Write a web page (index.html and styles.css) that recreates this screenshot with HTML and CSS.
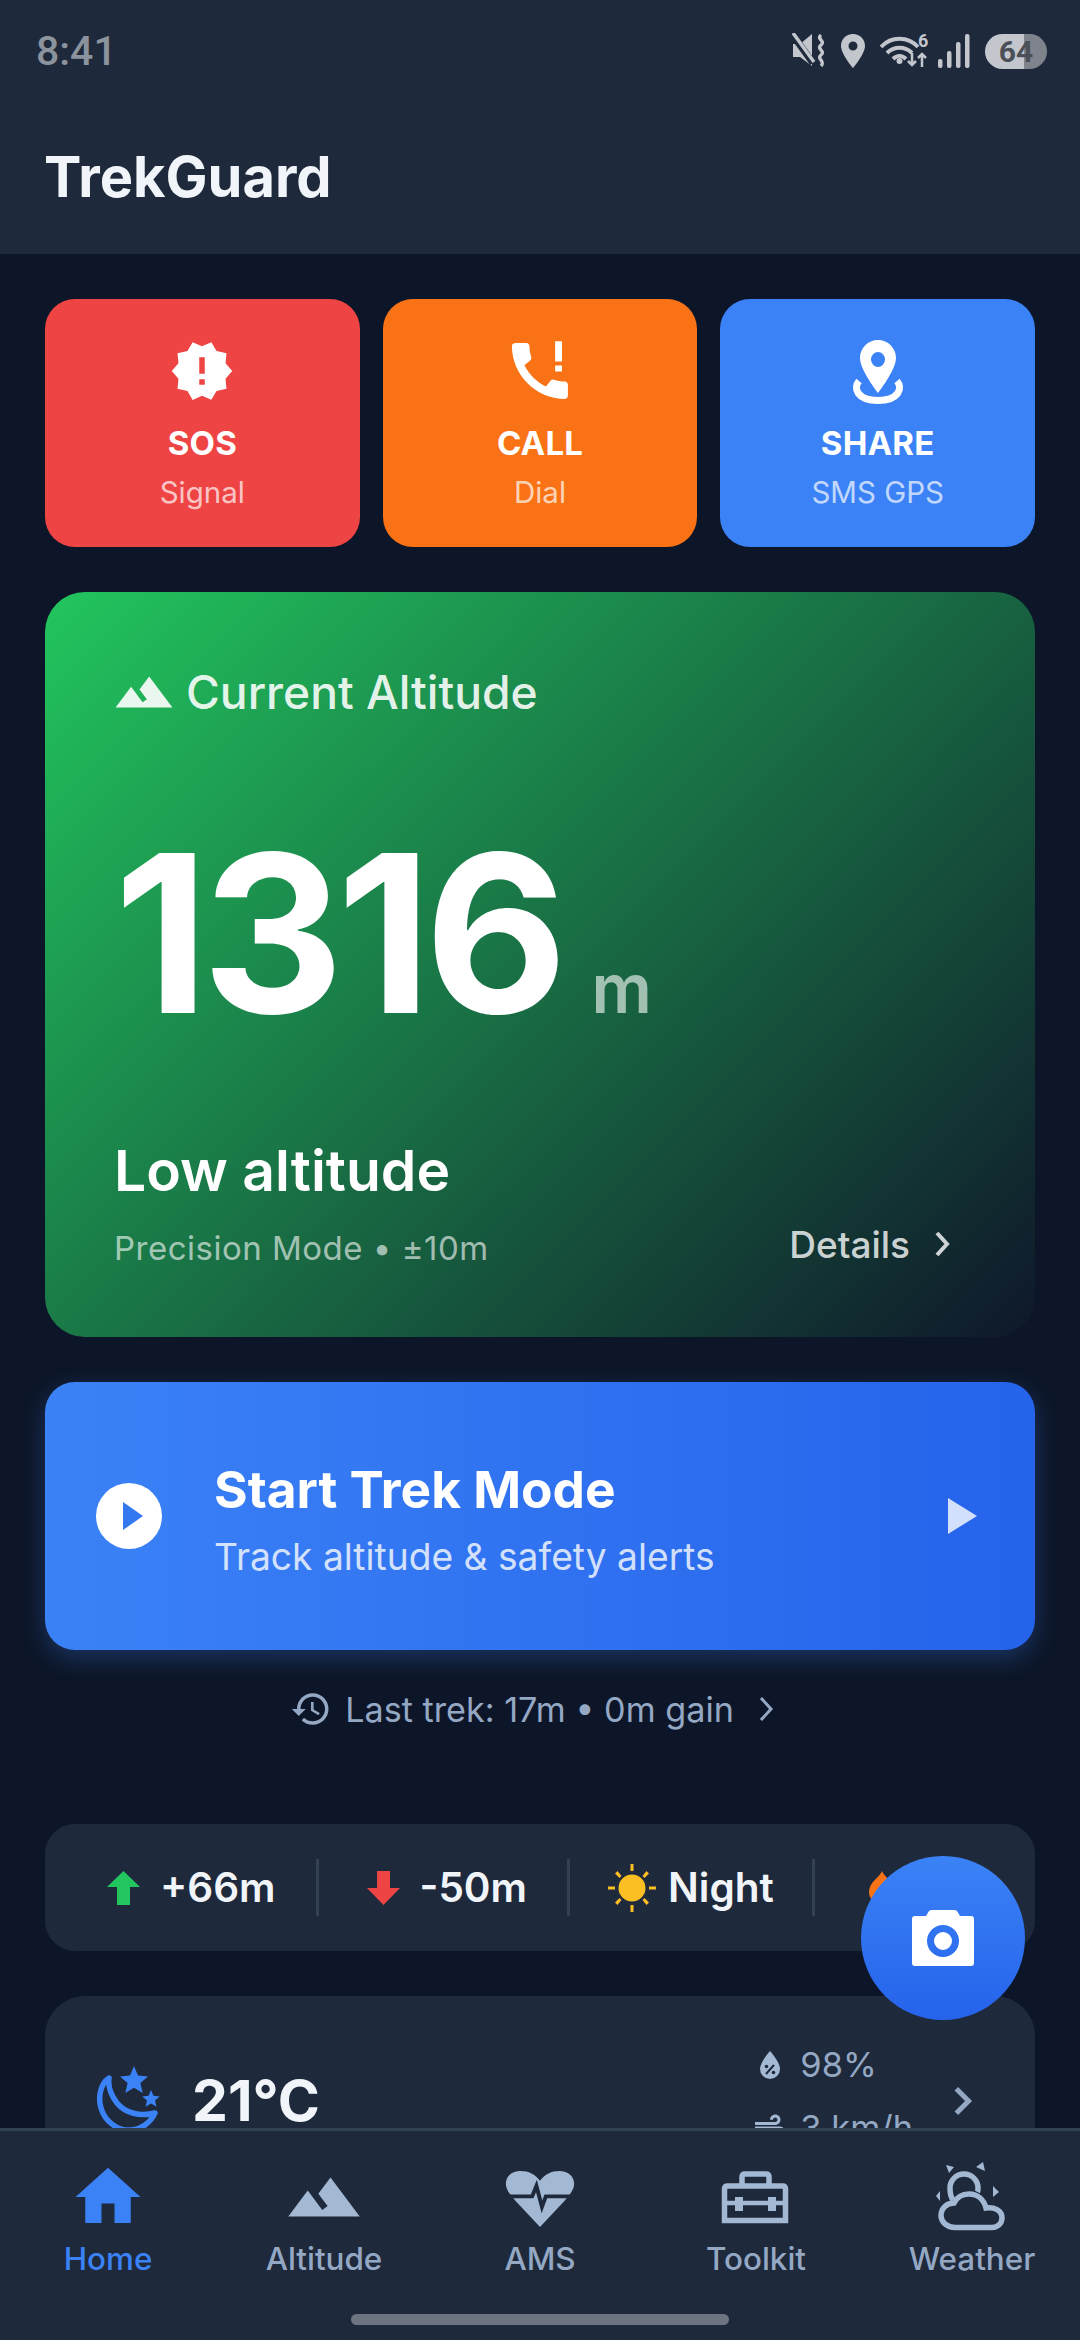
FILE: index.html
```html
<!DOCTYPE html>
<html lang="en">
<head>
<meta charset="utf-8">
<title>TrekGuard</title>
<link rel="stylesheet" href="styles.css">
</head>
<body>
<div class="phone">
  <header class="appbar">
    <div class="status">
      <span class="clock">8:41</span>
      <div class="status-icons">
        <svg class="si-mute" viewBox="0 0 36 36"><path class="si-fill" d="M1 11h7L20 1v32l-12-9H1z"/><path class="si-gap" d="M0 1l21 29"/><path class="si-line" d="M1 0l21 29"/><path class="si-line" d="M29 2c-5 4 5 6 0 10s5 6 0 10 5 6 0 11"/></svg>
        <svg class="si-pin" viewBox="0 0 24 34"><path class="si-fill" fill-rule="evenodd" d="M12 0C5 0 0 5 0 12c0 8 12 22 12 22s12-14 12-22C24 5 19 0 12 0zm0 7.500a4.500 4.500 0 1 1 0 9 4.500 4.500 0 0 1 0-9z"/></svg>
        <svg class="si-wifi" viewBox="0 -6 48 48"><path class="si-wave" d="M1 14C11 3 28 3 38 14"/><path class="si-wave" d="M7 20c7-7 18-7 25 0"/><path class="si-wave" d="M13 26c4-4 9-4 13 0"/><circle class="si-fill" cx="19.500" cy="28" r="3"/><text class="si-six" x="38" y="14">6</text><path class="si-thin" d="M32 20v12m-4-4l4 4 4-4"/><path class="si-thin" d="M42 34V21m-4 4l4-4 4 4"/></svg>
        <svg class="si-signal" viewBox="0 0 32 34"><rect class="si-fill" x="0" y="25" width="4.500" height="9" rx="2"/><rect class="si-fill" x="9" y="17" width="4.500" height="17" rx="2"/><rect class="si-fill" x="18" y="8" width="4.500" height="26" rx="2"/><rect class="si-fill" x="27" y="0" width="4.500" height="34" rx="2"/></svg>
        <span class="battery">64</span>
      </div>
    </div>
    <h1 class="brand">TrekGuard</h1>
  </header>

  <main class="content">
    <section class="actions">
      <div class="action action-red">
        <svg class="action-icon" viewBox="0 0 24 24"><path d="M23 12l-2.440-2.790.34-3.690-3.610-.82-1.890-3.200L12 2.960 8.600 1.500 6.710 4.690 3.100 5.500l.34 3.700L1 12l2.440 2.790-.34 3.700 3.610.82L8.600 22.500l3.400-1.470 3.400 1.460 1.890-3.190 3.610-.82-.34-3.690L23 12zm-10 5h-2v-2h2v2zm0-4h-2V7h2v6z"/></svg>
        <span class="action-title">SOS</span>
        <span class="action-sub">Signal</span>
      </div>
      <div class="action action-orange">
        <svg class="action-icon" viewBox="0 0 24 24"><g transform="translate(-1.600 -1.600) scale(1.131)"><path d="M20.010 15.380c-1.230 0-2.420-.2-3.530-.56-.35-.12-.74-.03-1.010.24l-1.570 1.970c-2.830-1.350-5.480-3.900-6.890-6.830l1.950-1.660c.27-.28.35-.67.24-1.020-.37-1.110-.56-2.300-.56-3.530 0-.54-.45-.99-.99-.99H4.190C3.650 3 3 3.240 3 3.990 3 13.280 10.730 21 20.010 21c.71 0 .99-.63.99-1.180v-3.450c0-.54-.45-.99-.99-.99z"/></g><path d="M17.500 1.200H20v7.300h-2.500zM17.500 10H20v2.200h-2.500z"/></svg>
        <span class="action-title">CALL</span>
        <span class="action-sub">Dial</span>
      </div>
      <div class="action action-blue">
        <svg class="action-icon" viewBox="0 0 66 66"><path fill-rule="evenodd" d="M33 2C23 2 15 10 15 20c0 12 18 35 18 35s18-23 18-35C51 10 43 2 33 2zm0 12a7 7.500 0 1 1 0 15 7 7.500 0 0 1 0-15z"/><path class="ring" d="M14 43C8 50 12 62.500 33 62.500S58 50 52 43"/></svg>
        <span class="action-title">SHARE</span>
        <span class="action-sub">SMS GPS</span>
      </div>
    </section>

    <section class="altitude">
      <div class="alt-head">
        <svg class="alt-mtn" viewBox="0 0 24 24"><path d="M14 6l-3.750 5 2.850 3.800-1.600 1.200C9.810 13.750 7 10 7 10l-6 8h22L14 6z"/></svg>
        <span>Current Altitude</span>
      </div>
      <div class="alt-value"><span class="alt-num">1316</span><span class="alt-unit">m</span></div>
      <div class="alt-level">Low altitude</div>
      <div class="alt-foot">
        <span class="alt-mode">Precision Mode • ±10m</span>
        <span class="alt-details">Details
          <svg class="chev chev-details" viewBox="0 0 16 28"><path d="M3 3l10 11L3 25"/></svg>
        </span>
      </div>
    </section>

    <section class="trek">
      <svg class="trek-play" viewBox="0 0 66 66"><circle cx="33" cy="33" r="33" fill="#fff"/><path d="M27 19l20 14-20 14z" fill="#3478f0"/></svg>
      <div class="trek-text">
        <div class="trek-title">Start Trek Mode</div>
        <div class="trek-sub">Track altitude &amp; safety alerts</div>
      </div>
      <svg class="trek-arrow" viewBox="0 0 29 36"><path d="M0 0l29 18L0 36z"/></svg>
    </section>

    <div class="last">
      <svg class="last-icon" viewBox="0 0 24 24"><path d="M13 3c-4.970 0-9 4.030-9 9H1l3.890 3.890.07.14L9 12H6c0-3.870 3.130-7 7-7s7 3.130 7 7-3.130 7-7 7c-1.930 0-3.680-.79-4.940-2.060l-1.420 1.420C8.270 19.990 10.510 21 13 21c4.970 0 9-4.030 9-9s-4.030-9-9-9zm-1 5v5l4.280 2.540.72-1.210-3.500-2.080V8H12z"/></svg>
      <span>Last trek: 17m • 0m gain</span>
      <svg class="chev chev-last" viewBox="0 0 16 28"><path d="M3 3l10 11L3 25"/></svg>
    </div>

    <section class="stats">
      <div class="stat">
        <svg class="arrow arrow-up" viewBox="0 0 33 34"><path d="M16.500 0L33 16H23v18H10V16H0z"/></svg>
        <span>+66m</span>
      </div>
      <i class="sep"></i>
      <div class="stat stat-down">
        <svg class="arrow arrow-down" viewBox="0 0 33 34"><path d="M10 0h13v17h10L16.500 34 0 17h10z"/></svg>
        <span>-50m</span>
      </div>
      <i class="sep"></i>
      <div class="stat stat-sun">
        <svg class="sun" viewBox="0 0 48 48"><circle cx="24" cy="24" r="13.500"/><path d="M22.500 0h3v7h-3zM22.500 41h3v7h-3zM0 22.500h7v3H0zM41 22.500h7v3h-7zM7 9.500L9.500 7l4 5-2 2zM41 9.500L38.500 7l-4 5 2 2zM7 38.500L9.500 41l4-5-2-2zM41 38.500L38.500 41l-4-5 2-2z"/></svg>
        <span>Night</span>
      </div>
      <i class="sep"></i>
      <div class="stat stat-fire">
        <svg class="flame" viewBox="0 0 26 34"><path d="M13 0c2 6 13 11 13 21 0 7-6 13-13 13S0 28 0 21C0 11 11 6 13 0z"/></svg>
      </div>
    </section>

    <section class="weather">
      <svg class="moon" viewBox="0 0 66 72"><path class="moon-line" d="M14 15C5 21 3 35 6 45c4 14 17 23 30 22 11-1 20-8 24-17-15 4-30 0-38-10-7-9-9-18-8-25z"/><path class="moon-star" d="M39 3l4 9.500 10 .9-7.600 6.600 2.300 10L39 24.800 30.300 30l2.300-10L25 13.400l10-.9zM56 27l2.500 5.800 6.300.6-4.800 4.100 1.500 6.200-5.500-3.300-5.500 3.300 1.500-6.200-4.800-4.100 6.300-.6z"/></svg>
      <span class="temp">21°C</span>
      <div class="wx-details">
        <div class="wx-row">
          <svg class="wx-icon" viewBox="0 0 36 36"><path class="wx-drop" d="M18 4s10 11 10 18a10 10 0 0 1-20 0C8 15 18 4 18 4z"/><path class="wx-pct" d="M14 27l8-9"/><circle class="wx-dot" cx="14.500" cy="19.500" r="1.800"/><circle class="wx-dot" cx="21.500" cy="25.500" r="1.800"/></svg>
          <span>98%</span>
        </div>
        <div class="wx-row">
          <svg class="wx-icon" viewBox="0 0 24 24"><path class="wx-drop" d="M14.500 17c0 1.650-1.350 3-3 3s-3-1.350-3-3h2c0 .55.45 1 1 1s1-.45 1-1-.45-1-1-1H2v-2h9.500c1.650 0 3 1.350 3 3zM19 6.500C19 4.570 17.430 3 15.500 3S12 4.570 12 6.500h2c0-.83.67-1.500 1.500-1.500s1.500.67 1.500 1.500S16.330 8 15.500 8H2v2h13.500c1.930 0 3.500-1.570 3.500-3.500zm-.5 4.500H2v2h16.500c.83 0 1.500.67 1.500 1.500s-.67 1.500-1.500 1.500v2c1.930 0 3.500-1.570 3.500-3.500S20.430 11 18.500 11z"/></svg>
          <span>3 km/h</span>
        </div>
      </div>
      <svg class="chev chev-wx" viewBox="0 0 18 28"><path d="M3 3l11 11L3 25"/></svg>
    </section>
  </main>

  <nav class="tabs">
    <div class="tab-row">
      <div class="tab tab-active">
        <svg class="tab-icon" viewBox="0 0 24 24"><path d="M10 20v-6h4v6h5v-8h3L12 3 2 12h3v8z"/></svg>
        <span>Home</span>
      </div>
      <div class="tab">
        <svg class="tab-icon" viewBox="0 0 24 24"><path d="M14 6l-3.750 5 2.850 3.800-1.600 1.200C9.810 13.750 7 10 7 10l-6 8h22L14 6z"/></svg>
        <span>Altitude</span>
      </div>
      <div class="tab">
        <svg class="tab-icon" viewBox="0 0 24 24"><path d="M12 21.200L4.500 13.200C2.500 11 1.500 9.500 1.500 8 1.500 5.500 3.500 4 6 4c2.500 0 4.500 1 6 3 1.500-2 3.500-3 6-3 2.500 0 4.500 1.500 4.500 4 0 1.500-1 3-3 5.200z"/><path class="heart-pulse" d="M1 11.800h8.600l1.300-3.200 1.700 6.400 1.200-3.200H23"/></svg>
        <span>AMS</span>
      </div>
      <div class="tab">
        <svg class="tab-icon" viewBox="0 0 78 78"><path class="tool-line" d="M25 26v-7q0-3 3-3h21q3 0 3 3v7"/><path class="tool-line" d="M7.500 62.500V31q0-3 3-3h55q3 0 3 3v31.500z"/><path class="tool-band" d="M7 45h64"/><rect x="18" y="39" width="8" height="14"/><rect x="51" y="39" width="8" height="14"/></svg>
        <span>Toolkit</span>
      </div>
      <div class="tab">
        <svg class="tab-icon" viewBox="0 0 78 78"><path class="tool-line" d="M20 42c-3-4-3-8-3-12a14 14 0 0 1 28 0c0 1 0 3-.5 4"/><path class="tool-line" d="M22 69.500C14 69.500 8 64 8 57.500 8 50 14 45 21 45c3-6 9-9 15-9 9 0 15 6 17 14 8-1 16 2 16 10 0 5-4 9.500-10 9.500z"/><path d="M13 7l8 2-5 6zM43 9l7-5 2 9zM60 28l6 6-6 5zM7 33l-4 5 4 5z"/></svg>
        <span>Weather</span>
      </div>
    </div>
    <div class="home-bar"></div>
  </nav>

  <button class="fab" type="button" aria-label="Camera">
    <svg class="fab-icon" viewBox="0 0 62 56"><path fill-rule="evenodd" d="M3 6h11l3-5q1-1 3-1h22q2 0 3 1l3 5h11q3 0 3 3v44q0 3-3 3H3q-3 0-3-3V9q0-3 3-3zm28 9a16 16 0 1 0 0 32 16 16 0 0 0 0-32zm0 7a9 9 0 1 1 0 18 9 9 0 0 1 0-18z"/></svg>
  </button>
</div>
</body>
</html>
```
FILE: styles.css
```css
* { box-sizing: border-box; }
html, body { margin: 0; padding: 0; }
body { background: #0f172a; font-family: "Inter", "Liberation Sans", sans-serif; color: #f1f5f9; }
h1 { margin: 0; }

.phone { position: relative; width: 1080px; height: 2340px; display: flex; flex-direction: column; overflow: hidden; background: #0d1628; }

/* App bar */
.appbar { flex: none; height: 254px; background: #1e293b; display: flex; flex-direction: column; }
.status { height: 42px; margin-top: 30px; padding: 0 33px 0 36px; display: flex; align-items: center; justify-content: space-between; }
.clock { font-family: "Roboto", sans-serif; font-size: 41px; font-weight: 500; color: #8b939d; }
.status-icons { display: flex; align-items: center; }
.status-icons svg { display: block; flex: none; }
.si-fill { fill: #c3c7cd; }
.si-gap { stroke: #1e293b; stroke-width: 7; fill: none; }
.si-line { stroke: #c3c7cd; stroke-width: 3.500; fill: none; }
.si-wave { stroke: #c3c7cd; stroke-width: 4; fill: none; }
.si-thin { stroke: #c3c7cd; stroke-width: 2.500; fill: none; }
.si-six { font: 700 18px "Roboto", sans-serif; fill: #c3c7cd; }
.si-mute { width: 36px; height: 36px; }
.si-pin { width: 24px; height: 34px; margin-left: 13px; }
.si-wifi { width: 48px; height: 48px; margin-left: 15px; }
.si-signal { width: 32px; height: 34px; margin-left: 10px; }
.battery { width: 62px; height: 35px; margin-left: 15px; border-radius: 18px; background: linear-gradient(90deg, #c3c7cd 63%, #7e838c 63%); color: #4b4f57; font: 700 30px/35px "Roboto", sans-serif; text-align: center; }
.brand { margin: 72px 0 0 44px; font-size: 56px; line-height: 66px; font-weight: 700; color: #f1f5f9; }

/* Scrolling content */
.content { flex: 1; min-height: 0; overflow: hidden; padding: 45px 45px 0; display: flex; flex-direction: column; }

.actions { flex: none; display: flex; gap: 23px; }
.action { flex: 1; height: 248px; border-radius: 30px; padding-top: 39px; display: flex; flex-direction: column; align-items: center; color: #fff; }
.action-red { background: #ef4444; }
.action-orange { background: #f97316; }
.action-blue { background: #3b82f6; }
.action-icon { width: 66px; height: 66px; fill: #fff; display: block; }
.ring { fill: none; stroke: #fff; stroke-width: 7; }
.action-title { margin-top: 19px; font-size: 33px; line-height: 40px; font-weight: 700; letter-spacing: 0.200px; }
.action-sub { margin-top: 12px; font-size: 29.500px; line-height: 34px; color: rgba(255, 255, 255, 0.7); }

/* Altitude card */
.altitude { flex: none; margin-top: 45px; height: 745px; border-radius: 40px; padding: 73px 0 0 69px; background: linear-gradient(135deg, #22c55e 0%, #0f172a 100%); }
.alt-head { display: flex; align-items: center; gap: 11px; margin-left: -1px; height: 54px; font-size: 46.200px; font-weight: 500; color: rgba(255, 255, 255, 0.9); }
.alt-mtn { width: 62px; height: 62px; fill: rgba(255, 255, 255, 0.9); flex: none; }
.alt-value { display: flex; align-items: baseline; margin-top: 104px; }
.alt-num { font-size: 220px; line-height: 220px; font-weight: 700; letter-spacing: -7px; color: #fff; }
.alt-unit { margin-left: 31px; font-size: 67px; font-weight: 600; color: rgba(255, 255, 255, 0.6); }
.alt-level { margin-top: 95px; font-size: 57px; line-height: 66px; font-weight: 600; color: #fff; }
.alt-foot { display: flex; align-items: center; justify-content: space-between; margin-top: 24px; padding-right: 85px; }
.alt-mode { font-size: 33px; line-height: 40px; color: rgba(255, 255, 255, 0.6); letter-spacing: 0.500px; }
.alt-details { display: flex; align-items: center; gap: 24px; margin-top: -8px; font-size: 37px; font-weight: 500; color: rgba(255, 255, 255, 0.8); }
.chev { display: block; flex: none; fill: none; stroke-width: 4; }
.chev-details { width: 16px; height: 28px; stroke: rgba(255, 255, 255, 0.8); }

/* Start trek */
.trek { flex: none; margin-top: 45px; height: 268px; border-radius: 30px; padding: 0 58px 0 51px; display: flex; align-items: center; background: linear-gradient(90deg, #3b82f6 0%, #2563eb 100%); box-shadow: 0 8px 24px rgba(59, 130, 246, 0.28); }
.trek-play { width: 66px; height: 66px; flex: none; }
.trek-text { margin-left: 52px; padding-top: 6px; }
.trek-title { font-size: 51.400px; line-height: 60px; font-weight: 700; color: #fff; }
.trek-sub { margin-top: 16px; font-size: 37.200px; line-height: 44px; color: rgba(255, 255, 255, 0.8); }
.trek-arrow { width: 29px; height: 36px; margin-left: auto; fill: rgba(255, 255, 255, 0.8); }

/* Last trek */
.last { flex: none; margin-top: 28px; height: 62px; padding-right: 16px; display: flex; align-items: center; justify-content: center; font-size: 34.200px; color: #94a8c4; }
.last-icon { width: 42px; height: 42px; fill: #94a8c4; margin-right: 13px; }
.chev-last { width: 16px; height: 28px; margin-left: 24px; stroke: #94a8c4; stroke-width: 3; }

/* Stats strip */
.stats { flex: none; margin-top: 84px; height: 127px; border-radius: 30px; background: #1e293b; padding-left: 62px; display: flex; align-items: center; gap: 40px; overflow: hidden; font-size: 40.500px; font-weight: 600; color: #f1f5f9; }
.stat { display: flex; align-items: center; gap: 20px; flex: none; }
.stat-down { margin-left: 8px; }
.stat-sun { margin-left: -2px; margin-right: -2px; gap: 12px; }
.stat-fire { margin-left: 14px; }
.sep { flex: none; width: 3px; height: 57px; background: #334155; }
.arrow { width: 33px; height: 34px; display: block; }
.arrow-up { fill: #22c55e; }
.arrow-down { fill: #ef4444; }
.sun { width: 48px; height: 48px; fill: #fbbf24; display: block; }
.flame { width: 26px; height: 34px; fill: #f97316; display: block; }

/* Weather card */
.weather { flex: none; margin-top: 45px; height: 210px; border-radius: 40px; background: #1e293b; padding: 0 62px 0 50px; display: flex; align-items: center; }
.moon { width: 66px; height: 72px; flex: none; margin-top: -5px; }
.moon-line { fill: none; stroke: #3b82f6; stroke-width: 5.500; stroke-linejoin: round; }
.moon-star { fill: #3b82f6; }
.temp { margin-left: 31px; font-size: 57px; line-height: 66px; font-weight: 700; color: #f1f5f9; }
.wx-details { margin-left: auto; display: flex; flex-direction: column; gap: 19px; margin-top: -10px; font-size: 34.400px; line-height: 44px; color: #94a8c4; }
.wx-row { display: flex; align-items: center; gap: 12px; }
.wx-icon { width: 36px; height: 36px; flex: none; }
.wx-drop { fill: #a3b8d2; }
.wx-pct { stroke: #1e293b; stroke-width: 2; }
.wx-dot { fill: #1e293b; }
.chev-wx { width: 20px; height: 32px; margin-left: 40px; stroke: #94a8c4; stroke-width: 4.500; }

/* Bottom tabs */
.tabs { flex: none; height: 212px; background: #1e293b; border-top: 3px solid #334155; padding-top: 27px; }
.tab-row { display: flex; }
.tab { flex: 1; display: flex; flex-direction: column; align-items: center; font-size: 31.400px; line-height: 36px; font-weight: 500; color: #94a8c4; }
.tab span { margin-top: 5px; }
.tab-icon { width: 78px; height: 78px; fill: #a3b8d2; display: block; }
.tab-active { color: #3b82f6; }
.tab-active .tab-icon { fill: #3b82f6; }
.heart-pulse { fill: none; stroke: #1e293b; stroke-width: 1.200; }
.tool-line { fill: none; stroke: #a3b8d2; stroke-width: 5.500; }
.tool-band { fill: none; stroke: #a3b8d2; stroke-width: 4.500; }
.home-bar { width: 378px; height: 11px; margin: 37px auto 0; border-radius: 6px; background: #6b7480; }

/* Floating camera button */
.fab { position: absolute; left: 861px; top: 1856px; width: 164px; height: 164px; padding: 0; border: 0; border-radius: 50%; background: linear-gradient(180deg, #3b82f6 0%, #2563eb 100%); display: flex; align-items: center; justify-content: center; }
.fab-icon { width: 62px; height: 56px; fill: #fff; display: block; }
```
